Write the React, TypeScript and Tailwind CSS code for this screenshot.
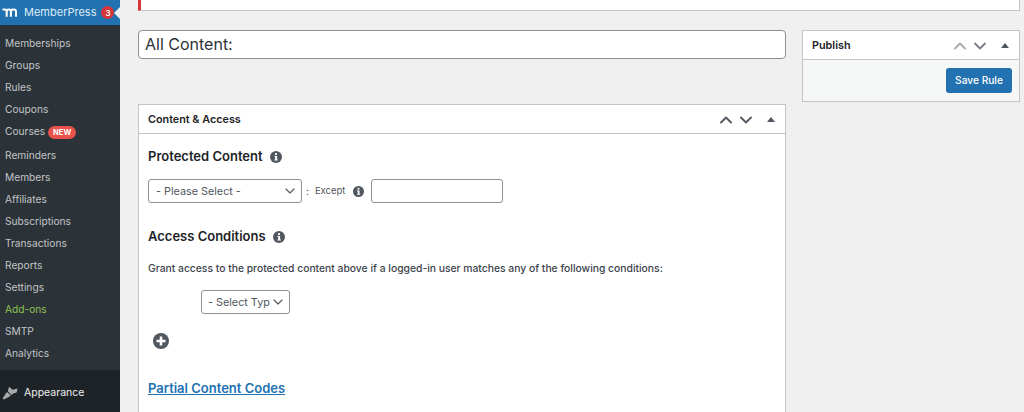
import { ChevronDown, ChevronUp } from 'lucide-react';

const items = ['Memberships', 'Groups', 'Rules', 'Coupons', 'Courses', 'Reminders', 'Members', 'Affiliates', 'Subscriptions', 'Transactions', 'Reports', 'Settings', 'Add-ons', 'SMTP', 'Analytics'];

function Info({ size = 12 }: { size?: number }) {
  return (
    <svg width={size} height={size} viewBox="0 0 12 12" className="shrink-0">
      <circle cx="6" cy="6" r="6" fill="#50575e" />
      <rect x="5" y="2.2" width="2" height="1.8" fill="#fff" />
      <path d="M4.4 5h2.7v3.6h.8v1H4.4v-1h.8V6h-.8z" fill="#fff" />
    </svg>
  );
}

function BoxControls({ upColor, downColor }: { upColor: string; downColor: string }) {
  return (
    <div className="flex items-center">
      <span className="flex w-[20px] justify-center"><ChevronUp size={20} strokeWidth={2.2} color={upColor} className="shrink-0" /></span>
      <span className="flex w-[20px] justify-center"><ChevronDown size={20} strokeWidth={2.2} color={downColor} className="shrink-0" /></span>
      <svg width="8" height="5" viewBox="0 0 8 5" className="ml-[11px]">
        <path d="M4 0l4 5H0z" fill="#50575e" />
      </svg>
    </div>
  );
}

function Select({ label, className }: { label: string; className: string }) {
  return (
    <div className={`flex h-[24px] items-center justify-between rounded-[3px] border border-[#8c8f94] bg-white pr-[3px] text-[10.8px] text-[#50575e] ${className}`}>
      <span className="whitespace-nowrap pt-[2px]">{label}</span>
      <ChevronDown size={16} strokeWidth={1.7} color="#50575e" className="-ml-[3px] shrink-0" />
    </div>
  );
}

export default function App() {
  return (
    <div className="flex h-[412px] w-[1024px] overflow-hidden bg-[#f0f0f1] font-['Inter','Liberation_Sans',sans-serif]">
      <aside className="flex w-[120px] shrink-0 flex-col bg-[#1d2327]">
        <div className="relative flex h-[25px] items-center bg-[#2271b1] pl-[2px] text-[11px] text-white">
          <svg width="15" height="9" viewBox="0 0 16 9" className="mr-[7px]">
            <path d="M.5 1.2H3c1.2 0 2 .8 2 2V9M5 3.2c0-1.2.8-2 2-2h.5c1.2 0 2 .8 2 2V9M9.5 3.2c0-1.2.8-2 2-2h1c1.5 0 2.5 1 2.5 2.5V9" fill="none" stroke="#fff" strokeWidth="2.2" />
          </svg>
          <span className="text-[#dcebf7]">MemberPress</span>
          <span className="ml-[5px] flex h-[13px] w-[13px] items-center justify-center rounded-full bg-[#d63638] text-[8px] font-semibold">3</span>
          <span className="absolute right-0 top-[7px] h-0 w-0 border-y-[6px] border-r-[6px] border-y-transparent border-r-[#f0f0f1]" />
        </div>
        <nav className="flex h-[345px] flex-col bg-[#2c3338] pt-[8px]">
          {items.map((item) => (
            <div key={item} className={`flex shrink-0 items-center pl-[5px] text-[10.2px] ${item === 'Courses' ? 'h-[24px] pb-[2px]' : 'h-[22px]'} ${item === 'Add-ons' ? 'text-[#8cc152]' : 'text-[#c3c4c7]'}`}>
              {item}
              {item === 'Courses' && (
                <span className="ml-[3px] rounded-full bg-[#e9524a] px-[5px] py-[1px] text-[7.5px] leading-[11px] font-bold text-white">NEW</span>
              )}
            </div>
          ))}
        </nav>
        <div className="flex flex-1 items-center pl-[2px] pt-[3px] text-[10.5px] text-[#f0f0f1]">
          <svg width="16" height="14" viewBox="0 0 16 14" className="mr-[6px]">
            <path d="M7 .8l3.6 3 5-1.400-1 4-3.500 1-1.500 1.600L5.800 5.200zM5 6l3.800 3.200-1.600 1.600-5.400 2.800-1.200-1.200L3.400 8z" fill="#a7aaad" />
          </svg>
          <span>Appearance</span>
        </div>
      </aside>

      <main className="flex min-w-0 flex-1 flex-col pl-[18px] pr-[4px]">
        <div className="h-[11px] shrink-0 border-x border-b border-[#c3c4c7] border-l-[3px] border-l-[#d63638] bg-white" />
        <div className="mt-[19px] flex gap-[16px]">
          <div className="flex w-[648px] shrink-0 flex-col">
            <div className="flex h-[29px] items-center rounded-[4px] border border-[#8c8f94] bg-white pb-[1px] pl-[6px] text-[16px] text-[#2c3338]">
              All Content:
            </div>
            <section className="mt-[45px] h-[320px] border border-[#c3c4c7] bg-white">
              <header className="flex h-[29px] items-center justify-between border-b border-[#c3c4c7] pl-[9px] pr-[10px] pt-[1px]">
                <h2 className="pt-[2px] text-[10.8px] font-semibold text-[#1d2327]">Content &amp; Access</h2>
                <BoxControls upColor="#50575e" downColor="#50575e" />
              </header>
              <div className="pl-[9px] pt-[14px]">
                <div className="flex h-[17px] items-center gap-[7px]">
                  <h3 className="text-[13px] font-semibold text-[#1d2327]">Protected Content</h3>
                  <Info />
                </div>
                <div className="mt-[14px] flex items-center">
                  <Select label="- Please Select -" className="w-[154px] pl-[7px]" />
                  <span className="ml-[4px] pt-[1px] text-[10px] text-[#3c434a]">:</span>
                  <span className="ml-[6px] pt-[1px] text-[9.5px] text-[#50575e]">Except</span>
                  <span className="ml-[8px]"><Info size={11} /></span>
                  <div className="ml-[7px] h-[24px] w-[132px] rounded-[3px] border border-[#8c8f94] bg-white" />
                </div>
                <div className="mt-[25px] flex h-[17px] items-center gap-[7px]">
                  <h3 className="text-[13px] font-semibold text-[#1d2327]">Access Conditions</h3>
                  <Info />
                </div>
                <p className="mt-[16px] text-[10.34px] font-medium leading-[14px] text-[#3c434a]">
                  Grant access to the protected content above if a logged-in user matches any of the following conditions:
                </p>
                <Select label="- Select Typ" className="ml-[53px] mt-[15px] w-[89px] pl-[6px]" />
                <svg width="16" height="16" viewBox="0 0 16 16" className="ml-[5px] mt-[19px]">
                  <circle cx="8" cy="8" r="8" fill="#50575e" />
                  <path d="M6.7 3.500h2.600v3.200h3.200v2.600H9.300v3.200H6.700V9.300H3.500V6.700h3.200z" fill="#fff" />
                </svg>
                <a className="mt-[30px] block text-[13px] font-semibold text-[#2271b1] underline">Partial Content Codes</a>
              </div>
            </section>
          </div>
          <aside className="w-[218px] shrink-0">
            <section className="border border-[#c3c4c7] bg-white">
              <header className="flex h-[29px] items-center justify-between border-b border-[#c3c4c7] pl-[9px] pr-[10px] pt-[1px]">
                <h2 className="pt-[2px] text-[10.8px] font-semibold text-[#1d2327]">Publish</h2>
                <BoxControls upColor="#a7aaad" downColor="#787c82" />
              </header>
              <div className="flex h-[41px] items-center justify-end bg-[#f6f7f7] pr-[7px]">
                <button className="h-[25px] w-[66px] rounded-[3px] bg-[#2271b1] text-[10.2px] font-medium text-white">Save Rule</button>
              </div>
            </section>
          </aside>
        </div>
      </main>
    </div>
  );
}
